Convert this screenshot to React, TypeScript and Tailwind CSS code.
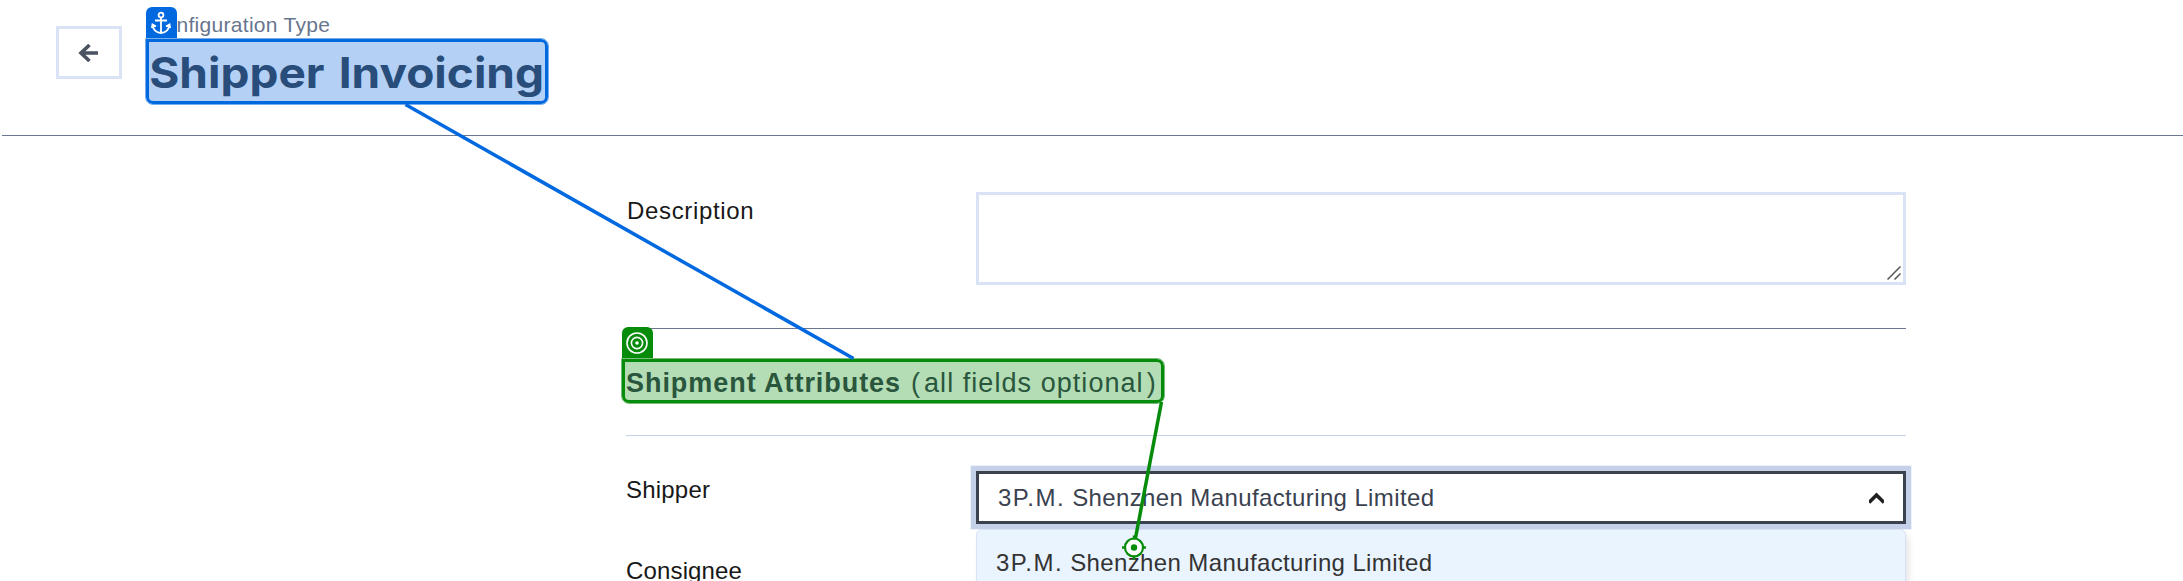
import React from "react";

function BackButton() {
  return (
    <button className="mt-[26px] flex h-[53px] w-[66px] shrink-0 items-center justify-center border-[3px] border-[#d9e3f5] bg-white pr-[2px]">
      <svg className="h-[18px] w-[20px]" viewBox="0 0 20 18" fill="none" stroke="#4b5262" strokeWidth="3.6">
        <path d="M20 9H3M11.500 1L3 9l8.500 8" />
      </svg>
    </button>
  );
}

function Header() {
  return (
    <header className="ml-[2px] flex h-[136px] border-b border-[#6b7690] pl-[54px]">
      <BackButton />
      <div className="ml-[24px] flex flex-col pt-[12px]">
        <div className="h-[26px] pl-[3px] text-[21px] leading-[26px] tracking-[0.3px] text-[#68758e]">Configuration Type</div>
        <h1 className="h-[67px] w-[403px] origin-left scale-x-[1.082] whitespace-nowrap pl-[3px] font-['Inter'] text-[42.500px] font-bold leading-[70px] text-[#284d7b] [word-spacing:3px]">
          Shipper Invoicing
        </h1>
      </div>
    </header>
  );
}

function CompanyName() {
  return (
    <span className="whitespace-nowrap tracking-[0.38px]">
      <span className="tracking-[1.500px]">3P.M.</span> Shenzhen Manufacturing Limited
    </span>
  );
}

function Annotations() {
  return (
    <>
      <div className="absolute left-[145.5px] top-[7px] flex h-[31px] w-[31.500px] items-center justify-center rounded-t-[6px] bg-[#0069e0]">
        <svg className="h-[24px] w-[20px]" viewBox="0 0 20 24" fill="none" stroke="#fff" strokeWidth="1.8">
          <circle cx="10" cy="4" r="2.4" />
          <path d="M10 6.4V22M4 9.5h12M1.5 13.5C1.5 18 5 21.8 10 22c5-.2 8.500-4 8.500-8.500M.8 17l.7-3.500L5 15.500M19.200 17l-.7-3.500L15 15.500" />
        </svg>
      </div>
      <div className="absolute left-[145px] top-[38px] h-[67px] w-[404px] rounded-[8px] rounded-tl-none border border-[#75adec]">
        <div className="h-full w-full rounded-[7px] rounded-tl-none border-[3px] border-[#0069e0]" />
      </div>
      <div className="absolute left-[621.5px] top-[327px] flex h-[31px] w-[31.500px] items-center justify-center rounded-t-[6px] bg-[#078b0b]">
        <svg className="h-[24px] w-[24px]" viewBox="0 0 24 24" fill="none" stroke="#fff" strokeWidth="1.6">
          <circle cx="12" cy="12" r="10" />
          <circle cx="12" cy="12" r="5.600" />
          <circle cx="12" cy="12" r="1.800" fill="#fff" stroke="none" />
        </svg>
      </div>
      <div className="absolute left-[621px] top-[358px] h-[46px] w-[544px] rounded-[8px] rounded-tl-none border border-[#78bd7b]">
        <div className="h-full w-full rounded-[7px] rounded-tl-none border-[3px] border-[#078b0b]" />
      </div>
      <svg className="pointer-events-none absolute inset-0 h-[581px] w-[2183px]" viewBox="0 0 2183 581" fill="none">
        <path d="M405.500 104.500L853.500 358.500" stroke="#0069e0" strokeWidth="3.500" />
        <path d="M1161.500 402L1135.500 538" stroke="#078b0b" strokeWidth="3.500" />
        <circle cx="1134" cy="547.500" r="9" fill="#fff" stroke="#078b0b" strokeWidth="2.200" />
        <circle cx="1134" cy="547.500" r="3.200" fill="#078b0b" />
        <path d="M1122 547.500h4M1142 547.500h4M1134 535.500v4M1134 555.500v4" stroke="#078b0b" strokeWidth="2.500" />
      </svg>
    </>
  );
}

export default function App() {
  return (
    <div className="relative h-[581px] w-[2183px] overflow-hidden bg-white font-['Liberation_Sans',sans-serif] text-[#181818]">
      <div className="absolute left-[147px] top-[40px] h-[63px] w-[400px] rounded-[6px] bg-[#b4d1f5]" />
      <div className="absolute left-[623px] top-[360px] h-[42px] w-[540px] rounded-[6px] bg-[#b4ddb5]" />
      <div className="relative">
        <Header />
        <main className="ml-[626px] w-[1280px]">
          <div className="flex h-[192px] pt-[56px]">
            <label className="w-[350px] pl-[1px] pt-[5px] text-[24px] leading-[28px] tracking-[0.65px]">Description</label>
            <div className="flex h-[93px] w-[930px] items-end justify-end border-[3px] border-[#d9e3f5] p-[2px]">
              <svg className="h-[14px] w-[14px]" viewBox="0 0 14 14" fill="none" stroke="#555" strokeWidth="1.500">
                <path d="M.5 13.500l13-13M7.500 13.500l6-6" />
              </svg>
            </div>
          </div>
          <h2 className="flex h-[108px] items-start whitespace-pre border-b border-t border-b-[#c5d1e8] border-t-[#6b7690] pt-[35px] text-[27px] leading-[39px] text-[#29563c]">
            <b className="w-[285px] tracking-[0.95px]">Shipment Attributes</b>
            <span className="tracking-[1.050px]">
              <span className="mr-[3px]">(</span>all fields optional<span className="ml-[3px]">)</span>
            </span>
          </h2>
          <div className="flex h-[82px] pt-[35px]">
            <label className="w-[350px] pt-[5px] text-[24px] leading-[28px] tracking-[0.2px]">Shipper</label>
            <div className="flex h-[53px] w-[930px] items-center justify-between border-[3px] border-[#3a4250] bg-white pl-[19px] pr-[19px] pt-[1px] text-[24px] text-[#3a4250] shadow-[0_0_0_5px_#c5d1e8,0_0_0_6px_#eef2fa]">
              <CompanyName />
              <svg className="h-[12px] w-[15px]" viewBox="0 0 15 12" fill="none" stroke="#202020" strokeWidth="3.600">
                <path d="M0 10.500l7.500-7.500 7.500 7.500" />
              </svg>
            </div>
          </div>
          <div className="flex pt-[11px]">
            <label className="w-[350px] pt-[28px] text-[24px] leading-[28px] tracking-[0.15px]">Consignee</label>
            <div className="h-[80px] w-[930px] rounded-t-[6px] border border-[#d9e3f5] bg-[#eaf4ff] pl-[19px] pt-[19px] text-[24px] leading-[28px] text-[#333] shadow-[3px_5px_6px_rgba(0,0,0,0.1)]">
              <CompanyName />
            </div>
          </div>
        </main>
      </div>
      <Annotations />
    </div>
  );
}
